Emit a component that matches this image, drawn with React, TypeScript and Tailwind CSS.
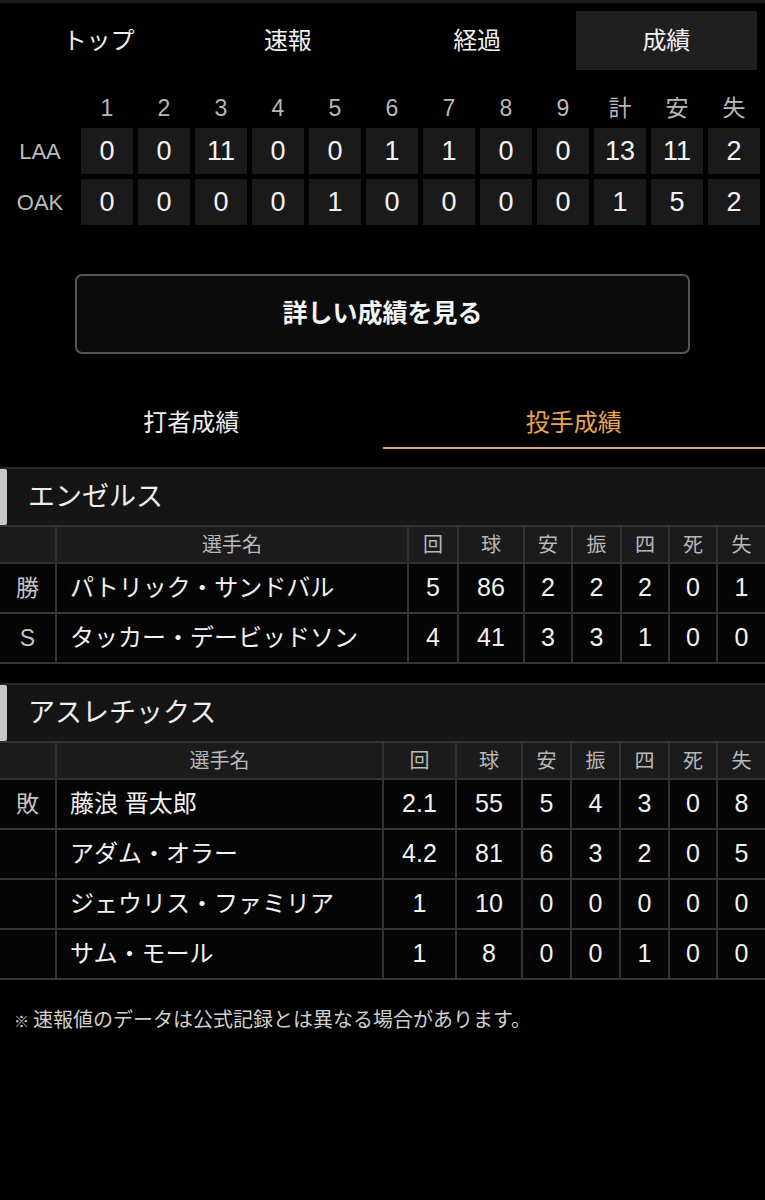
import React from "react";

const tabs = ["トップ", "速報", "経過", "成績"];

const innings = ["1", "2", "3", "4", "5", "6", "7", "8", "9", "計", "安", "失"];
const lines = [
  { team: "LAA", scores: ["0", "0", "11", "0", "0", "1", "1", "0", "0", "13", "11", "2"] },
  { team: "OAK", scores: ["0", "0", "0", "0", "1", "0", "0", "0", "0", "1", "5", "2"] },
];

const statHeads = ["回", "球", "安", "振", "四", "死", "失"];

type Pitcher = { mark: string; name: string; stats: string[] };

const angels: Pitcher[] = [
  { mark: "勝", name: "パトリック・サンドバル", stats: ["5", "86", "2", "2", "2", "0", "1"] },
  { mark: "S", name: "タッカー・デービッドソン", stats: ["4", "41", "3", "3", "1", "0", "0"] },
];

const athletics: Pitcher[] = [
  { mark: "敗", name: "藤浪 晋太郎", stats: ["2.1", "55", "5", "4", "3", "0", "8"] },
  { mark: "", name: "アダム・オラー", stats: ["4.2", "81", "6", "3", "2", "0", "5"] },
  { mark: "", name: "ジェウリス・ファミリア", stats: ["1", "10", "0", "0", "0", "0", "0"] },
  { mark: "", name: "サム・モール", stats: ["1", "8", "0", "0", "1", "0", "0"] },
];

const TeamTable = ({ name, rows, cols }: { name: string; rows: Pitcher[]; cols: number[] }) => {
  return (
    <section>
      {/* team bar */}
      <div className="flex h-[58px] border-t-2 border-[#262626] bg-[#151515]">
        <div className="w-[7px] bg-[#c8c8c8] rounded-r-[2px]" />
        <div className="flex items-center pl-[21px] text-[27px] text-[#ededed]">{name}</div>
      </div>
      <table className="w-full table-fixed border-collapse">
        <colgroup>
          {cols.map((w, i) => (
            <col key={i} style={{ width: w }} />
          ))}
        </colgroup>
        <thead>
          <tr className="h-[37px] bg-[#1b1b1b] text-[20px] text-[#b8b8b8]">
            <th className="border-y-2 border-[#333] font-normal" />
            <th className="border-y-2 border-l-2 border-[#333] font-normal">選手名</th>
            {statHeads.map((h) => (
              <th key={h} className="border-y-2 border-l-2 border-[#333] font-normal">
                {h}
              </th>
            ))}
          </tr>
        </thead>
        <tbody>
          {rows.map((p) => (
            <tr key={p.name} className="h-[50px] bg-[#050505]">
              <td className="border-b-2 border-[#333] text-center text-[23px] text-[#c4c4c4]">{p.mark}</td>
              <td className="border-b-2 border-l-2 border-[#333] pl-[13px] text-[24px] text-[#f2f2f2] whitespace-nowrap">
                {p.name}
              </td>
              {p.stats.map((s, i) => (
                <td key={i} className="border-b-2 border-l-2 border-[#333] text-center text-[25px] text-[#f2f2f2]">
                  {s}
                </td>
              ))}
            </tr>
          ))}
        </tbody>
      </table>
    </section>
  );
};

export default function App() {
  return (
    <div className="min-h-[1200px] w-[765px] bg-black font-['Liberation_Sans','Noto_Sans_CJK_JP',sans-serif]">
      <div className="h-[3px] bg-[#1c1c1c]" />

      {/* top tabs */}
      <nav className="grid grid-cols-4 gap-2 px-2 pt-2">
        {tabs.map((t, i) => (
          <div
            key={t}
            className={`flex h-[59px] items-center justify-center text-[24px] text-[#f0f0f0] ${i === 3 ? "bg-[#1f1f1f]" : ""}`}
          >
            {t}
          </div>
        ))}
      </nav>

      {/* line score */}
      <div className="mt-[23px] grid grid-cols-[76px_repeat(12,52px)] gap-x-[5px] gap-y-[5px]">
        <div className="h-[30px]" />
        {innings.map((n) => (
          <div key={n} className="flex h-[30px] items-center justify-center text-[23px] text-[#b8b8b8]">
            {n}
          </div>
        ))}
        {lines.map((l) => (
          <React.Fragment key={l.team}>
            <div className="flex h-[46px] items-center justify-center pl-[4px] text-[22px] text-[#bdbdbd]">{l.team}</div>
            {l.scores.map((s, i) => (
              <div key={i} className="flex h-[46px] items-center justify-center bg-[#1a1a1a] text-[27px] text-[#f2f2f2]">
                {s}
              </div>
            ))}
          </React.Fragment>
        ))}
      </div>

      <div className="mx-[75px] mt-[49px] flex h-[80px] items-center justify-center rounded-[7px] border-2 border-[#555] bg-[#0b0b0b] text-[25px] font-bold text-[#f4f4f4]">
        詳しい成績を見る
      </div>

      {/* stat tabs */}
      <div className="mt-[45px] grid grid-cols-2">
        <div className="flex h-[50px] items-center justify-center border-b-2 border-transparent text-[24px] text-[#ededed]">
          打者成績
        </div>
        <div className="flex h-[50px] items-center justify-center border-b-2 border-[#d9a46a] text-[24px] text-[#eaa54f]">
          投手成績
        </div>
      </div>

      <div className="mt-[18px]">
        <TeamTable name="エンゼルス" rows={angels} cols={[56, 352, 50, 66, 48, 49, 48, 48, 48]} />
      </div>
      <div className="mt-[19px]">
        <TeamTable name="アスレチックス" rows={athletics} cols={[56, 327, 73, 66, 49, 49, 49, 48, 48]} />
      </div>

      <p className="mt-[25px] flex items-baseline pl-[14px] text-[20px] text-[#cfcfcf]">
        <span className="mr-[4px] text-[15px]">※</span>
        速報値のデータは公式記録とは異なる場合があります。
      </p>
    </div>
  );
}
